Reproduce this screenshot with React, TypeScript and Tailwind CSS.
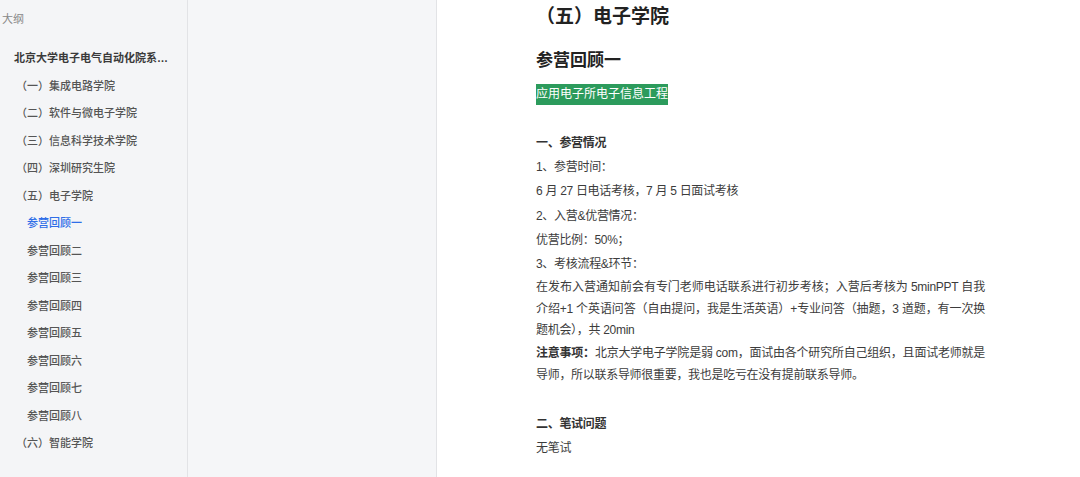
const FONT = '"Liberation Sans", "Noto Sans CJK SC", sans-serif';

const OUTLINE = [
  { label: "（一）集成电路学院", level: 1 },
  { label: "（二）软件与微电子学院", level: 1 },
  { label: "（三）信息科学技术学院", level: 1 },
  { label: "（四）深圳研究生院", level: 1 },
  { label: "（五）电子学院", level: 1 },
  { label: "参营回顾一", level: 2, active: true },
  { label: "参营回顾二", level: 2 },
  { label: "参营回顾三", level: 2 },
  { label: "参营回顾四", level: 2 },
  { label: "参营回顾五", level: 2 },
  { label: "参营回顾六", level: 2 },
  { label: "参营回顾七", level: 2 },
  { label: "参营回顾八", level: 2 },
  { label: "（六）智能学院", level: 1 },
];

function Sidebar() {
  return (
    <div className="w-[188px] shrink-0 border-r border-[#e4e5e8] bg-[#f4f5f7]">
      <div className="pl-[2px] pt-[11px] text-[11px] leading-[16px] text-[#888]">大纲</div>
      <div className="mt-[18px] w-[174px] truncate pl-[14px] text-[11px] font-semibold leading-[27.5px] text-[#3a3a3a]">
        北京大学电子电气自动化院系保研经验分享
      </div>
      {OUTLINE.map((item) => (
        <div
          key={item.label}
          className={
            "text-[11px] font-medium leading-[27.5px] " +
            (item.level === 1 ? "pl-[16px] " : "pl-[27px] ") +
            (item.active ? "text-[#2f6ee8]" : "text-[#555]")
          }
        >
          {item.label}
        </div>
      ))}
    </div>
  );
}

// one-line paragraphs
function Line({ children, className = "" }: { children: React.ReactNode; className?: string }) {
  return <p className={"text-[12px] leading-[24.2px] tracking-[-0.3px] text-[#3c3c3c] " + className}>{children}</p>;
}

// wrapped paragraphs
function Para({ children }: { children: React.ReactNode }) {
  return (
    <p className="mt-[1px] text-justify text-[12px] leading-[21.6px] tracking-[-0.3px] text-[#3c3c3c]">{children}</p>
  );
}

function Article() {
  return (
    <div className="flex-1 bg-white pl-[99px]">
      <div className="w-[449px]">
        <h1 className="mt-[3px] text-[19px] font-bold leading-[28px] text-[#222]">（五）电子学院</h1>
        <h2 className="mt-[17px] text-[17px] font-bold leading-[26px] text-[#222]">参营回顾一</h2>
        <div className="mt-[10px] inline-block bg-[#2c9b5c] text-[12px] leading-[21px] text-white">
          应用电子所电子信息工程
        </div>
        <Line className="mt-[26px] font-bold text-[#333]">一、参营情况</Line>
        <Line>1、参营时间：</Line>
        <Line>6 月 27 日电话考核，7 月 5 日面试考核</Line>
        <Line>2、入营&amp;优营情况：</Line>
        <Line>优营比例：50%；</Line>
        <Line>3、考核流程&amp;环节：</Line>
        <Para>
          在发布入营通知前会有专门老师电话联系进行初步考核；入营后考核为 5minPPT 自我介绍+1 个英语问答（自由提问，我是生活英语）+专业问答（抽题，3 道题，有一次换题机会），共 20min
        </Para>
        <Para>
          <span className="font-bold text-[#333]">注意事项：</span>
          北京大学电子学院是弱 com，面试由各个研究所自己组织，且面试老师就是导师，所以联系导师很重要，我也是吃亏在没有提前联系导师。
        </Para>
        <Line className="mt-[26px] font-bold text-[#333]">二、笔试问题</Line>
        <Line>无笔试</Line>
      </div>
    </div>
  );
}

export default function App() {
  return (
    <div className="flex h-[477px] w-[1080px] overflow-hidden" style={{ fontFamily: FONT }}>
      <Sidebar />
      <div className="w-[249px] shrink-0 border-r border-[#e2e3e6] bg-[#f5f6f8] shadow-[1px_0_3px_rgba(0,0,0,0.06)]" />
      <Article />
    </div>
  );
}
